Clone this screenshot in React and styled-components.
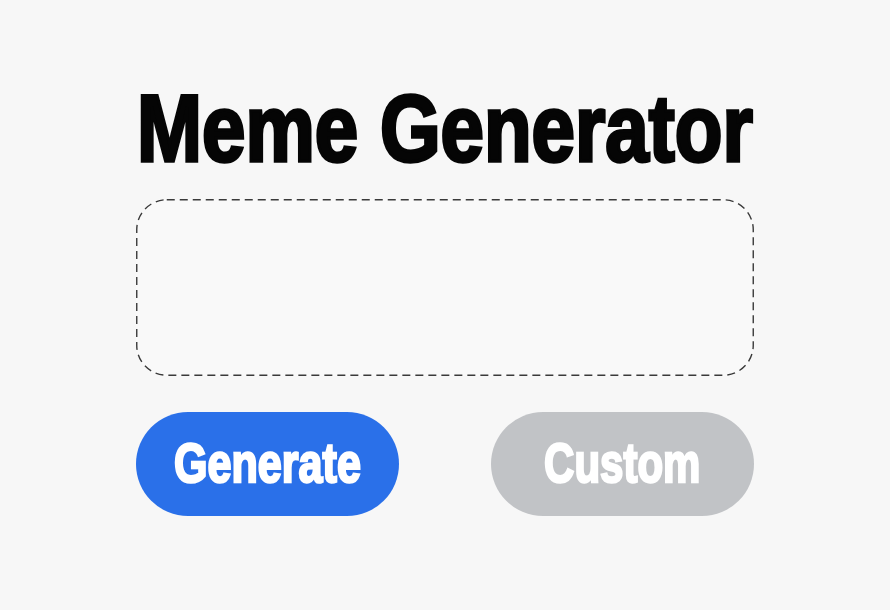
import React from 'react';
import styled, { createGlobalStyle } from 'styled-components';

const GlobalStyle = createGlobalStyle`
  html, body {
    margin: 0;
    padding: 0;
    background: #f7f7f7;
  }
  body {
    font-family: "Liberation Sans", Arial, sans-serif;
  }
`;

const Page = styled.main`
  display: flex;
  justify-content: center;
  padding-top: 82px;
`;

const Column = styled.div`
  width: 618px;
  display: flex;
  flex-direction: column;
  align-items: stretch;
`;

const Title = styled.h1`
  display: flex;
  justify-content: center;
  margin: 0;
  font-size: 94px;
  line-height: 1;
  font-weight: 700;
  color: #050505;
  white-space: nowrap;
  -webkit-text-stroke: 3.5px #050505;
`;

// squeezes the bold face into a condensed display cut
const Condensed = styled.span`
  display: inline-block;
  flex-shrink: 0;
  transform: scaleX(${p => p.$x || 0.82});
  white-space: nowrap;
`;

const Canvas = styled.div`
  position: relative;
  height: 177px;
  margin-top: 23px;
  background: #f9f9f9;
  border-radius: 30px;
`;

const Frame = styled.svg`
  position: absolute;
  inset: 0;
  width: 100%;
  height: 100%;
  overflow: visible;
`;

const Actions = styled.div`
  display: flex;
  justify-content: space-between;
  margin-top: 36px;
`;

const Button = styled.button`
  display: flex;
  align-items: center;
  justify-content: center;
  width: 263px;
  height: 104px;
  border: none;
  border-radius: 52px;
  background: ${p => (p.$variant === 'muted' ? '#c1c3c6' : '#2a70e9')};
  color: #ffffff;
  font-family: inherit;
  font-size: 56px;
  font-weight: 700;
  -webkit-text-stroke: 2.5px #ffffff;
  cursor: pointer;
  padding: 0 0 4px;
  white-space: nowrap;
`;

function DashedFrame() {
  return (
    <Frame>
      <rect
        x="0.75"
        y="0.75"
        width="calc(100% - 1.5px)"
        height="calc(100% - 1.5px)"
        rx="30"
        fill="none"
        stroke="#3a3a3a"
        strokeWidth="1.4"
        strokeDasharray="8 5"
      />
    </Frame>
  );
}

export default function App() {
  return (
    <>
      <GlobalStyle />
      <Page>
        <Column>
          <Title>
            <Condensed $x={0.83}>Meme Generator</Condensed>
          </Title>
          <Canvas>
            <DashedFrame />
          </Canvas>
          <Actions>
            <Button>
              <Condensed $x={0.77}>Generate</Condensed>
            </Button>
            <Button $variant="muted">
              <Condensed $x={0.75}>Custom</Condensed>
            </Button>
          </Actions>
        </Column>
      </Page>
    </>
  );
}
